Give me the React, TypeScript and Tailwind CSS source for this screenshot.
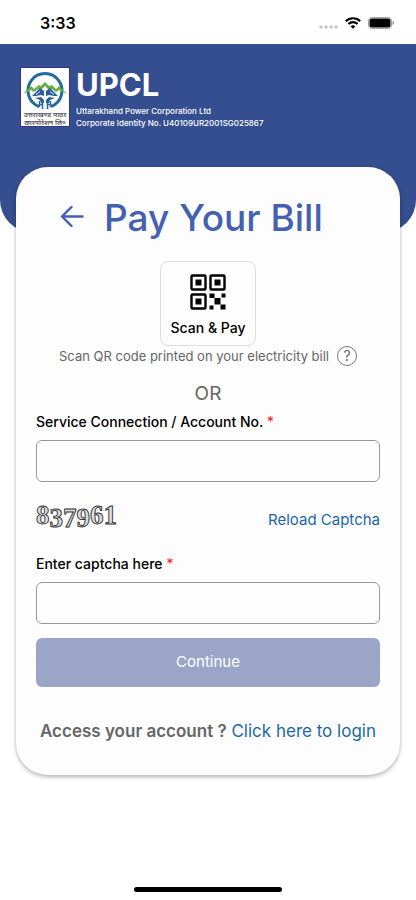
import React, { useState } from 'react';

const UpclLogo = () => (
  <svg viewBox="0 0 50 60" className="w-[50px] h-[60px] shrink-0" role="img" aria-label="UPCL logo">
    <rect x="0.5" y="0.5" width="49" height="59" fill="#fdfdfd" stroke="#33318a" />
    <path d="M19 39.500A17 17 0 1 1 31 39.500" fill="none" stroke="#226a9f" strokeWidth="3" />
    <path d="M3 27l8-8 3 3 5-4 2 1 4-4 4 4 3-1 4 4 3-3 8 8-8-4-3 2-4-3-3 1-4-4-4 4-3-1-4 3-3-2z" fill="#68ad45" />
    <path d="M12 29l8-8 4 3v5l-3-1-5 1zM38 29l-8-8-4 3v5l3-1 5 1z" fill="#2a5f9e" />
    <path d="M15 31l6-1 3 3v3h-3l-1-3zM35 31l-6-1-3 3v3h3l1-3z" fill="#2a5f9e" />
    <path d="M16 27.500l4-3M34 27.500l-4-3" stroke="#d9e7f3" strokeWidth="1" />
    <path d="M19.500 34v6M30.500 34v6M22.500 36v6M27.500 36v6M19.500 37.500h3M27.500 37.500h3" fill="none" stroke="#226a9f" strokeWidth="1.500" />
    <text x="25" y="50" textAnchor="middle" fontSize="7" fontWeight="600" fill="#55555c" fontFamily="'Noto Sans', 'Noto Sans Devanagari', sans-serif">उत्तराखण्ड पावर</text>
    <text x="25" y="57.500" textAnchor="middle" fontSize="7" fontWeight="600" fill="#55555c" fontFamily="'Noto Sans', 'Noto Sans Devanagari', sans-serif">कारपोरेशन लि०</text>
  </svg>
);

const StatusBar = () => (
  <div className="flex items-center justify-between h-11 pl-10 pr-[22px] pt-0.5">
    <span className="text-base font-semibold text-black">3:33</span>
    <div className="flex items-center gap-[7px]">
      <svg viewBox="0 0 19 4" className="w-[19px] h-1 mt-2" fill="#c8c8c8">
        <circle cx="2" cy="2" r="1.8" />
        <circle cx="7" cy="2" r="1.8" />
        <circle cx="12" cy="2" r="1.8" />
        <circle cx="17" cy="2" r="1.8" />
      </svg>
      <svg viewBox="0 0 16 12" className="w-4 h-3" fill="none" stroke="#000" strokeWidth="2.2">
        <path d="M0.8 4.2a10.3 10.3 0 0 1 14.4 0" />
        <path d="M3.4 7a6.6 6.6 0 0 1 9.2 0" />
        <path d="M8 11.8L5.7 9.4a3.3 3.3 0 0 1 4.6 0z" fill="#000" stroke="none" />
      </svg>
      <svg viewBox="0 0 26 12" className="w-[26px] h-3">
        <rect x="0.5" y="0.5" width="23" height="11" rx="3" fill="none" stroke="#a0a0a0" />
        <rect x="1.500" y="1.500" width="21" height="9" rx="2" fill="#000" />
        <path d="M24.6 4v4c1.6-.6 1.6-3.400 0-4z" fill="#777" />
      </svg>
    </div>
  </div>
);

const QrIcon = () => (
  <svg viewBox="0 0 36 36" className="w-9 h-9" fill="#000">
    <g fill="none" stroke="#000" strokeWidth="2.4">
      <rect x="1.500" y="1.500" width="14" height="14" rx="1" />
      <rect x="20.500" y="1.500" width="14" height="14" rx="1" />
      <rect x="1.500" y="20.500" width="14" height="14" rx="1" />
    </g>
    <rect x="5.500" y="5.500" width="6" height="6" />
    <rect x="24.500" y="5.500" width="6" height="6" />
    <rect x="5.500" y="24.500" width="6" height="6" />
    <rect x="19.500" y="19.500" width="5" height="4.500" />
    <rect x="31.500" y="19.500" width="4" height="4" />
    <rect x="24.500" y="24" width="6" height="6.500" />
    <rect x="19.500" y="31.500" width="4" height="4" />
    <rect x="30.500" y="30.500" width="5" height="5" />
  </svg>
);

const Captcha = () => (
  <svg viewBox="0 0 84 36" className="w-[84px] h-9">
    <text
      x="0"
      y="26"
      dy="0 3 0 0 -3 0"
      fontFamily="'Liberation Serif', serif"
      fontSize="27"
      fontWeight="700"
      fill="#dcdcdc"
      stroke="#2f2f2f"
      strokeWidth="0.9"
    >
      837961
    </text>
  </svg>
);

const App: React.FC = () => {
  const [account, setAccount] = useState('');
  const [captcha, setCaptcha] = useState('');

  return (
    <div className="flex flex-col min-h-screen bg-white font-['Inter',sans-serif]">
      <StatusBar />
      {/* Header */}
      <header className="flex items-start gap-1.5 h-[188px] px-5 pt-[23px] bg-[#344e8f] rounded-b-[32px] text-white">
        <UpclLogo />
        <div>
          <div className="text-[31px] leading-9 font-bold">UPCL</div>
          <p className="text-[8px] leading-3 font-medium mt-0.5">Uttarakhand Power Corporation Ltd</p>
          <p className="text-[8px] leading-3 font-medium">Corporate Identity No. U40109UR2001SG025867</p>
        </div>
      </header>

      {/* Bill card */}
      <main className="-mt-[65px] mx-4 px-5 pt-[27px] pb-8 bg-[#fdfdfd] rounded-[32px] shadow-[0_2px_4px_rgba(0,0,0,0.3)]">
        <div className="flex items-center gap-5 pl-6">
          <button type="button" aria-label="Back">
            <svg viewBox="0 0 24 24" className="w-6 h-6" fill="none" stroke="#4460b0" strokeWidth="2.400" strokeLinecap="round" strokeLinejoin="round">
              <path d="M22.500 10.500H2M11.500 1L2 10.500l9.500 9.500" />
            </svg>
          </button>
          <h1 className="text-[37px] leading-12 font-medium text-[#4460b0]">Pay Your Bill</h1>
        </div>

        <button
          type="button"
          className="flex flex-col items-center justify-center gap-2 w-24 h-[85px] mx-auto mt-[19px] pt-1 border border-[#dedede] rounded-lg text-sm leading-5 font-medium text-black"
        >
          <QrIcon />
          Scan &amp; Pay
        </button>
        <div className="flex items-center justify-center gap-2">
          <p className="text-[13px] leading-5 text-[#666]">Scan QR code printed on your electricity bill</p>
          <button type="button" aria-label="Help" className="w-5 h-5 border border-[#777] rounded-full text-sm leading-4 text-[#666]">
            ?
          </button>
        </div>
        <p className="mt-4 text-center text-[19px] leading-6 text-[#666]">OR</p>

        {/* Account */}
        <label htmlFor="account" className="block mt-1.5 text-sm leading-5 font-medium text-black">
          Service Connection / Account No. <span className="text-red-500">*</span>
        </label>
        <input
          id="account"
          type="text"
          value={account}
          onChange={(e) => setAccount(e.target.value)}
          className="block w-full h-[42px] mt-2 px-3 border border-[#999] rounded-md"
        />

        {/* Captcha */}
        <div className="flex items-end justify-between mt-4">
          <Captcha />
          <button type="button" className="text-[15px] leading-7 text-[#1c67a8]">Reload Captcha</button>
        </div>
        <label htmlFor="captcha" className="block mt-5 text-sm leading-5 font-medium text-black">
          Enter captcha here <span className="text-red-500">*</span>
        </label>
        <input
          id="captcha"
          type="text"
          value={captcha}
          onChange={(e) => setCaptcha(e.target.value)}
          className="block w-full h-[42px] mt-2 px-3 border border-[#999] rounded-md"
        />

        <button type="submit" className="w-full h-[49px] mt-3.5 bg-[#9aa5c8] rounded-md text-[15px] text-white">
          Continue
        </button>
        <p className="mt-8 text-center text-[17px] leading-6 whitespace-nowrap text-[#666]">
          <span className="font-semibold">Access your account ?</span>{' '}
          <a href="#login" className="text-[#1c67a8]">Click here to login</a>
        </p>
      </main>

      <div className="w-[148px] h-[5px] mx-auto mt-auto mb-2 rounded-full bg-black" />
    </div>
  );
};

export default App;
